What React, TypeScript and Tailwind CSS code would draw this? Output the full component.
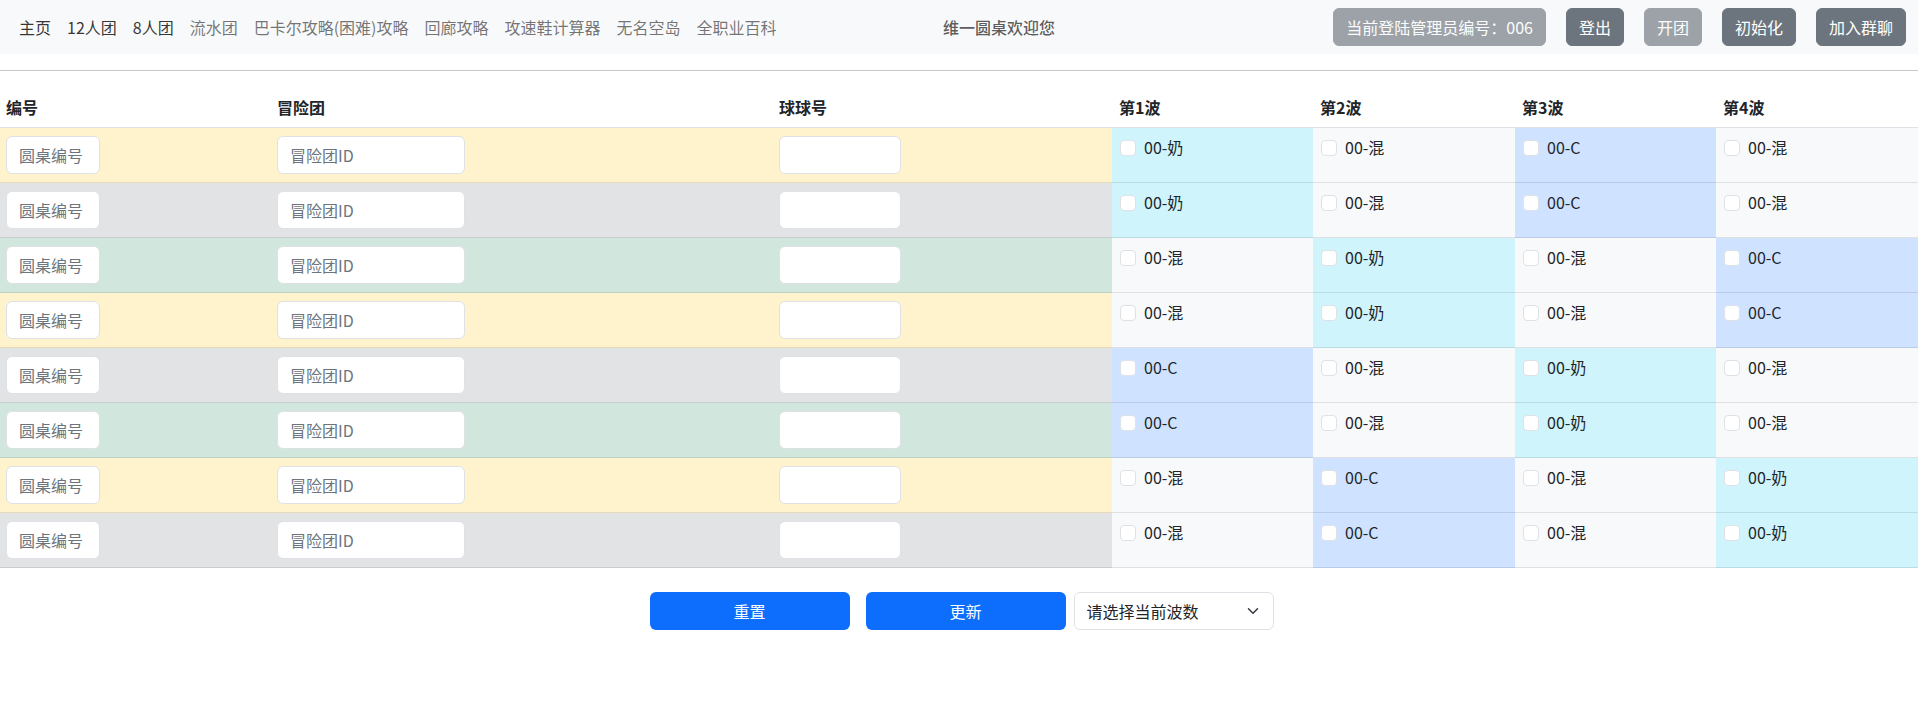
const fontStack = "font-['Noto_Sans_CJK_SC','Noto_Sans',sans-serif]"

const navLinks = [
  { label: '主页', dark: true },
  { label: '12人团', dark: true },
  { label: '8人团', dark: true },
  { label: '流水团' },
  { label: '巴卡尔攻略(困难)攻略' },
  { label: '回廊攻略' },
  { label: '攻速鞋计算器' },
  { label: '无名空岛' },
  { label: '全职业百科' },
]

type Role = '奶' | '混' | 'C'

const roleCell: Record<Role, string> = {
  奶: 'bg-[#cff4fc] border-[#badce3]',
  混: 'bg-[#f8f9fa] border-[#dfe0e1]',
  C: 'bg-[#cfe2ff] border-[#bacbe6]',
}

const waves: Role[][] = [
  ['奶', '混', 'C', '混'],
  ['奶', '混', 'C', '混'],
  ['混', '奶', '混', 'C'],
  ['混', '奶', '混', 'C'],
  ['C', '混', '奶', '混'],
  ['C', '混', '奶', '混'],
  ['混', 'C', '混', '奶'],
  ['混', 'C', '混', '奶'],
]

const rowTone = [
  'bg-[#fff3cd] border-[#e6dbb9]',
  'bg-[#e2e3e5] border-[#cbccce]',
  'bg-[#d1e7dd] border-[#bcd0c7]',
  'bg-[#fff3cd] border-[#e6dbb9]',
  'bg-[#e2e3e5] border-[#cbccce]',
  'bg-[#d1e7dd] border-[#bcd0c7]',
  'bg-[#fff3cd] border-[#e6dbb9]',
  'bg-[#e2e3e5] border-[#cbccce]',
]

const inputClass =
  'block h-[38px] rounded-md border border-[#dee2e6] bg-white px-3 text-base text-[#212529] placeholder:text-[#6c757d] outline-none'

const navButton = 'h-[38px] rounded-md border border-[#6c757d] bg-[#6c757d] px-3 text-base text-white'

function Navbar() {
  return (
    <nav className="flex h-[54px] items-center bg-[#f8f9fa] pl-[11px] pr-[12px]">
      <ul className="flex w-[914px] items-center">
        {navLinks.map((link) => (
          <li key={link.label}>
            <a className={`block px-2 text-base leading-6 ${link.dark ? 'text-black/80' : 'text-black/55'}`}>{link.label}</a>
          </li>
        ))}
      </ul>
      <span className="ml-[18px] text-base font-medium text-black/65">维一圆桌欢迎您</span>
      <div className="ml-auto flex items-center gap-5">
        <button className={`${navButton} opacity-65`}>当前登陆管理员编号：006</button>
        <button className={navButton}>登出</button>
        <button className={`${navButton} opacity-65`}>开团</button>
        <button className={navButton}>初始化</button>
        <button className={navButton}>加入群聊</button>
      </div>
    </nav>
  )
}

function WaveTable() {
  return (
    <table className="w-full table-fixed border-collapse text-base text-[#212529]">
      <colgroup>
        <col className="w-[271px]" />
        <col className="w-[502px]" />
        <col className="w-[339px]" />
        <col className="w-[201px]" />
        <col className="w-[202px]" />
        <col className="w-[201px]" />
        <col />
      </colgroup>
      <thead>
        <tr className="h-[56px]">
          {['编号', '冒险团', '球球号'].map((title) => (
            <th key={title} className="border-b border-[#dee2e6] px-[6px] pb-2 text-left align-bottom font-bold leading-6">
              {title}
            </th>
          ))}
          {['第1波', '第2波', '第3波', '第4波'].map((title) => (
            <th key={title} className="border-b border-[#dee2e6] px-[7px] pb-2 text-left align-bottom font-bold leading-6">
              {title}
            </th>
          ))}
        </tr>
      </thead>
      <tbody>
        {waves.map((row, i) => (
          <tr key={i} className="h-[55px]">
            <td className={`border-b px-[6px] py-2 ${rowTone[i]}`}>
              <input className={`${inputClass} w-[94px]`} placeholder="圆桌编号" />
            </td>
            <td className={`border-b px-[6px] py-2 ${rowTone[i]}`}>
              <input className={`${inputClass} w-[188px]`} placeholder="冒险团ID" />
            </td>
            <td className={`border-b px-[6px] py-2 ${rowTone[i]}`}>
              <input className={`${inputClass} w-[122px]`} />
            </td>
            {row.map((role, w) => (
              <td key={w} className={`border-b px-2 pt-2 pb-2 align-top ${roleCell[role]}`}>
                <label className="flex items-center gap-2 leading-6">
                  <input
                    type="checkbox"
                    className="h-4 w-4 shrink-0 appearance-none rounded border border-[#dee2e6] bg-white"
                  />
                  <span className="-translate-y-px">00-{role}</span>
                </label>
              </td>
            ))}
          </tr>
        ))}
      </tbody>
    </table>
  )
}

function Footer() {
  return (
    <div className="mt-6 flex justify-center pl-[5px]">
      <button className="h-[38px] w-[200px] rounded-md bg-[#0d6efd] text-base text-white">重置</button>
      <button className="ml-4 h-[38px] w-[200px] rounded-md bg-[#0d6efd] text-base text-white">更新</button>
      <div className="relative ml-2 w-[200px]">
        <select className="h-[38px] w-full appearance-none rounded-md border border-[#dee2e6] bg-white pl-3 pr-9 text-base text-[#212529] outline-none">
          <option>请选择当前波数</option>
        </select>
        <svg
          className="pointer-events-none absolute right-[15px] top-[13px] h-3 w-3 text-[#343a40]"
          viewBox="0 0 16 16"
          fill="none"
          stroke="currentColor"
          strokeWidth="2"
          strokeLinecap="round"
          strokeLinejoin="round"
        >
          <path d="m2 5 6 6 6-6" />
        </svg>
      </div>
    </div>
  )
}

export default function App() {
  return (
    <div className={`h-[714px] bg-white ${fontStack}`}>
      <Navbar />
      <hr className="mt-4 border-t border-[#c8c8c8]" />
      <WaveTable />
      <Footer />
    </div>
  )
}
